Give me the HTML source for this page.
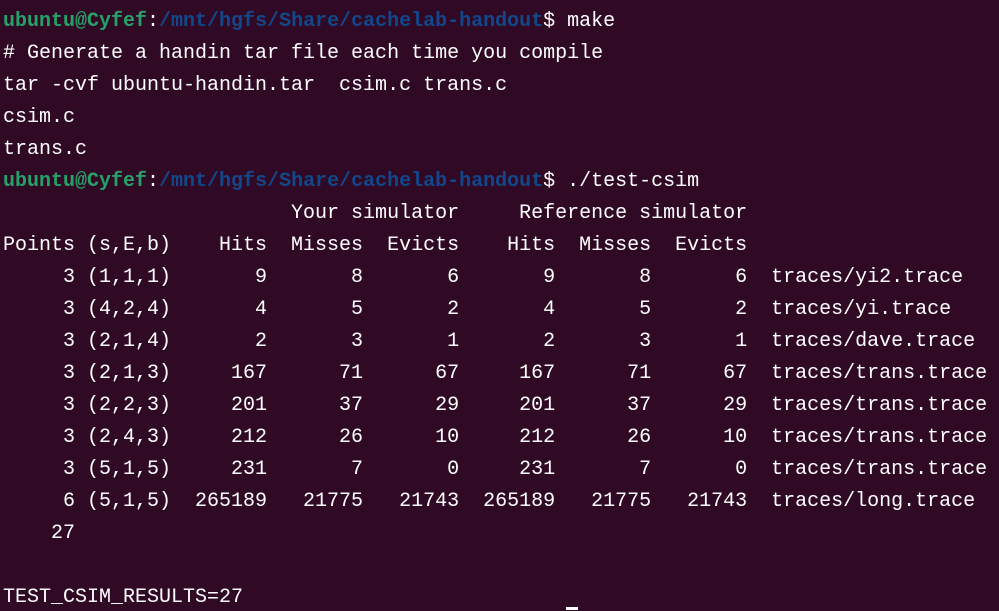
<!DOCTYPE html>
<html><head><style>
html,body{margin:0;padding:0;background:#300a24;width:999px;height:611px;overflow:hidden}
pre{margin:0;padding:6px 0 0 3px;font-family:"Liberation Mono",monospace;font-size:20px;line-height:32px;color:#fff}
.g{color:#26a269;font-weight:bold}.b{color:#12488b;font-weight:bold}
.cur{position:absolute;left:566px;top:607px;width:12px;height:3px;background:#fff}
</style></head><body>
<pre><span class="g">ubuntu@Cyfef</span>:<span class="b">/mnt/hgfs/Share/cachelab-handout</span>$ make
# Generate a handin tar file each time you compile
tar -cvf ubuntu-handin.tar  csim.c trans.c
csim.c
trans.c
<span class="g">ubuntu@Cyfef</span>:<span class="b">/mnt/hgfs/Share/cachelab-handout</span>$ ./test-csim
                        Your simulator     Reference simulator
Points (s,E,b)    Hits  Misses  Evicts    Hits  Misses  Evicts
     3 (1,1,1)       9       8       6       9       8       6  traces/yi2.trace
     3 (4,2,4)       4       5       2       4       5       2  traces/yi.trace
     3 (2,1,4)       2       3       1       2       3       1  traces/dave.trace
     3 (2,1,3)     167      71      67     167      71      67  traces/trans.trace
     3 (2,2,3)     201      37      29     201      37      29  traces/trans.trace
     3 (2,4,3)     212      26      10     212      26      10  traces/trans.trace
     3 (5,1,5)     231       7       0     231       7       0  traces/trans.trace
     6 (5,1,5)  265189   21775   21743  265189   21775   21743  traces/long.trace
    27

TEST_CSIM_RESULTS=27</pre>
<div class="cur"></div>
</body></html>
